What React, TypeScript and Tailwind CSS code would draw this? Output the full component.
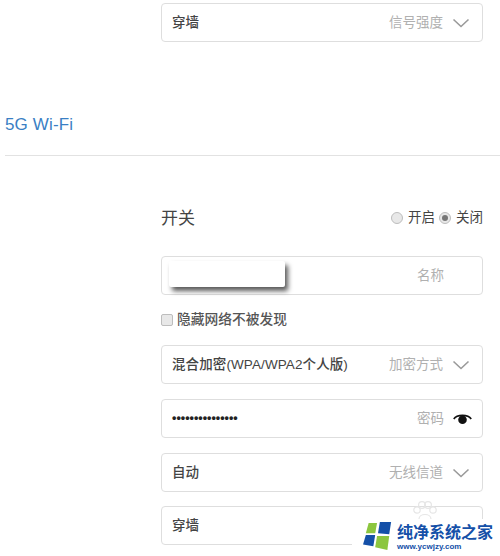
const font = { fontFamily: '"Liberation Sans","Noto Sans CJK SC",sans-serif' };

function Chevron() {
  return (
    <svg width="18" height="10" viewBox="0 0 18 10" fill="none" className="ml-[9px] shrink-0">
      <path d="M1.5 1.5 L9 8.5 L16.5 1.5" stroke="#9a9a9a" strokeWidth="1.6" />
    </svg>
  );
}

function Eye() {
  return (
    <svg width="19" height="12" viewBox="0 0 19 12" className="ml-[9px] shrink-0">
      <path d="M0.8 6 C4 1.2 15 1.2 18.2 6" fill="none" stroke="#111" strokeWidth="1.7" />
      <circle cx="9.5" cy="6.8" r="4.3" fill="#111" />
    </svg>
  );
}

function Field({ value, label, right, cls = "pr-[12px]" }: { value?: string; label: string; right?: React.ReactNode; cls?: string }) {
  return (
    <div className={`h-[39px] ${cls} flex items-center rounded-[4px] border border-[#dedede] pl-[10px] bg-white`}>
      <span className="flex-1 pt-[2px] text-[13.5px] tracking-[0.1px] font-medium text-[#444]">{value}</span>
      <span className="pt-[2px] text-[13.5px] text-[#b0b0b0]">{label}</span>
      {right}
    </div>
  );
}

function Radio({ on }: { on?: boolean }) {
  return (
    <span className="w-[12px] h-[12px] rounded-full border border-[#bdbdbd] bg-[#e8e8e8] flex items-center justify-center">
      {on && <span className="w-[6px] h-[6px] rounded-full bg-[#777]" />}
    </span>
  );
}

export default function App() {
  return (
    <div className="relative w-[500px] h-[556px] overflow-hidden bg-white" style={font}>
      <div className="pt-[3px] pl-[161px] pr-[17px]">
        <Field value="穿墙" label="信号强度" right={<Chevron />} />
      </div>

      <div className="pl-[5px] mt-[73px] text-[17px] tracking-[0.15px] leading-[20px] text-[#3a7fc4]">5G Wi-Fi</div>
      <div className="ml-[5px] mt-[20px] h-px bg-[#e2e2e2]" />

      <div className="pl-[161px] pr-[17px] mt-[50px]">
        <div className="flex items-center justify-between h-[26px]">
          <span className="text-[17px] text-[#444]">开关</span>
          <span className="flex items-center text-[13.5px] text-[#444] -mt-[2px]">
            <Radio />
            <span className="ml-[5px] mr-[4px]">开启</span>
            <Radio on />
            <span className="ml-[5px]">关闭</span>
          </span>
        </div>

        <div className="relative mt-[24px]">
          <Field label="名称" cls="pr-[38px]" />
          <div className="absolute left-[8px] top-[5px] w-[116px] h-[26px] rounded-[2px] bg-white shadow-[3px_4px_5px_rgba(0,0,0,0.65)]" />
        </div>

        <div className="flex items-center gap-[4px] mt-[16px] h-[18px]">
          <span className="w-[12px] h-[12px] rounded-[2px] border border-[#bdbdbd] bg-[#e8e8e8]" />
          <span className="text-[13.75px] font-medium text-[#555]">隐藏网络不被发现</span>
        </div>

        <Field cls="mt-[16px] pr-[12px]" value="混合加密(WPA/WPA2个人版)" label="加密方式" right={<Chevron />} />

        <div className="mt-[15px] h-[39px] flex items-center rounded-[4px] border border-[#dedede] pl-[10px] pr-[10px]">
          <span className="flex-1 text-[#222] text-[12.5px] font-bold">•••••••••••••••</span>
          <span className="pt-[2px] text-[13.5px] text-[#b0b0b0]">密码</span>
          <Eye />
        </div>

        <Field cls="mt-[15px] pr-[12px]" value="自动" label="无线信道" right={<Chevron />} />
        <Field cls="mt-[14px] pr-[12px]" value="穿墙" label="" />
      </div>

      {/* faint paw from the watermark, lying over the last field */}
      <svg width="28" height="22" viewBox="0 0 28 22" fill="none" stroke="#e6e6e6" strokeWidth="1.2" className="absolute left-[411px] top-[500px]">
        <circle cx="6" cy="10" r="3.2" />
        <circle cx="11" cy="5" r="3.4" />
        <circle cx="17" cy="5" r="3.4" />
        <circle cx="22" cy="10" r="3.2" />
        <path d="M8 19 C8 13 20 13 20 19" />
      </svg>

      {/* watermark over the page corner */}
      <div className="absolute left-[352px] top-[519px] w-[148px] h-[37px] bg-white flex items-start pl-[11px] pt-[3px]">
        <svg width="30" height="29" viewBox="0 0 32 31" className="shrink-0">
          <path d="M6 1 L15 1 L13 12 L3 12 Z" fill="#8cc63f" />
          <path d="M18 0 L30 0 L28 13 L16 12 Z" fill="#1450a8" />
          <path d="M3 14 L13 14 L11 26 L0 24 Z" fill="#1450a8" />
          <path d="M15 15 L28 15 L26 30 L13 27 Z" fill="#8cc63f" />
        </svg>
        <div className="ml-[4px] mt-[2px] flex flex-col">
          <span className="text-[16px] leading-[18px] font-bold text-[#1450a8] whitespace-nowrap">纯净系统之家</span>
          <span className="text-[8px] leading-[9px] font-bold text-[#1450a8] whitespace-nowrap">www.ycwjzy.com</span>
        </div>
      </div>
    </div>
  );
}
